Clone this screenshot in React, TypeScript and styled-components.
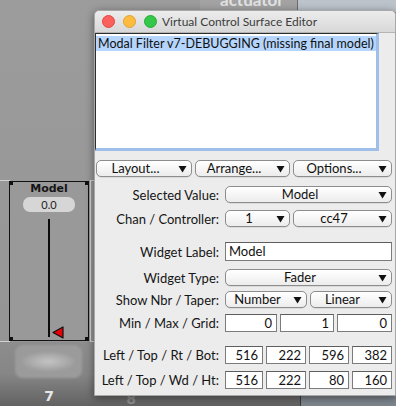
import styled, { createGlobalStyle } from 'styled-components';

const FONT = `"Lucida Grande", Lato, "DejaVu Sans", sans-serif`;

const GlobalStyle = createGlobalStyle`
    html, body {
        margin: 0;
        padding: 0;
        width: 396px;
        height: 406px;
        overflow: hidden;
        background: #9a9a9a;
    }
`

function ArrowDown() {
    return (
        <svg width="9" height="8" viewBox="0 0 9 8">
            <path d="M0.5 1 L8.5 1 L4.5 7.5 Z" fill="#111" />
        </svg>
    );
}

interface DropdownProps {
    value: string;
}

function Dropdown({ value }: DropdownProps) {
    return (
        <DropButton>
            <DropText>{value}</DropText>
            <ArrowBox><ArrowDown /></ArrowBox>
        </DropButton>
    );
}

function FaderWidget() {
    return (
        <>
            <NeighbourFrame style={{ left: -12, width: 20 }} />
            <NeighbourFrame style={{ left: 90, width: 20 }} />
            <FaderBox>
                <Corner $x="left" $y="top" />
                <Corner $x="right" $y="top" />
                <Corner $x="left" $y="bottom" />
                <Corner $x="right" $y="bottom" />
                <FaderTitle>Model</FaderTitle>
                <ValuePill>0.0</ValuePill>
                <Track />
                <Thumb width="12" height="13" viewBox="0 0 12 13">
                    <path d="M1 6.5 L11 1 L11 12 Z" fill="#e8000b" stroke="#111" strokeWidth="1.2" strokeLinejoin="round" />
                </Thumb>
            </FaderBox>
            <Blob />
            <StripNumber $x={49} $top={389} $color="#e8e8e8">7</StripNumber>
            <StripNumber $x={131} $top={392} $color="#8e8e8e">8</StripNumber>
        </>
    );
}

function App() {
    return (
        <Desktop>
            <GlobalStyle />
            <TopStrip>
                <TopLabel>actuator</TopLabel>
            </TopStrip>
            <TopRight />
            <LowerBand />
            <LowerRight />
            <FaderWidget />

            <Window>
                <TitleBar>
                    <Light $color="#fc605c" $border="#de4841" />
                    <Light $color="#fdbc40" $border="#dea234" />
                    <Light $color="#34c84a" $border="#27aa35" />
                    <TitleText>Virtual Control Surface Editor</TitleText>
                </TitleBar>

                <ListRow>
                    <ListBox>
                        <ListItem>Modal Filter v7-DEBUGGING (missing final model)</ListItem>
                    </ListBox>
                </ListRow>

                <ButtonRow>
                    <Dropdown value="Layout..." />
                    <Dropdown value="Arrange..." />
                    <Dropdown value="Options..." />
                </ButtonRow>

                <FormRow $top={9}>
                    <Label>Selected Value:</Label>
                    <Dropdown value="Model" />
                </FormRow>
                <FormRow $top={7}>
                    <Label>Chan / Controller:</Label>
                    <Split $cols="65px 1fr">
                        <Dropdown value="1" />
                        <Dropdown value="cc47" />
                    </Split>
                </FormRow>
                <FormRow $top={15}>
                    <Label>Widget Label:</Label>
                    <TextField $tall $align="left">Model</TextField>
                </FormRow>
                <FormRow $top={8}>
                    <Label>Widget Type:</Label>
                    <Dropdown value="Fader" />
                </FormRow>
                <FormRow $top={5}>
                    <Label>Show Nbr / Taper:</Label>
                    <Split $cols="82px 1fr">
                        <Dropdown value="Number" />
                        <Dropdown value="Linear" />
                    </Split>
                </FormRow>
                <FormRow $top={6}>
                    <Label>Min / Max / Grid:</Label>
                    <Split $cols="52px 54px 1fr" $gap={3}>
                        <TextField $align="right">0</TextField>
                        <TextField $align="right">1</TextField>
                        <TextField $align="right">0</TextField>
                    </Split>
                </FormRow>
                <FormRow $top={14}>
                    <Label>Left / Top / Rt / Bot:</Label>
                    <Split $cols="38px 40px 40px 1fr" $gap={3}>
                        <TextField $align="right">516</TextField>
                        <TextField $align="right">222</TextField>
                        <TextField $align="right">596</TextField>
                        <TextField $align="right">382</TextField>
                    </Split>
                </FormRow>
                <FormRow $top={7}>
                    <Label>Left / Top / Wd / Ht:</Label>
                    <Split $cols="38px 40px 40px 1fr" $gap={3}>
                        <TextField $align="right">516</TextField>
                        <TextField $align="right">222</TextField>
                        <TextField $align="right">80</TextField>
                        <TextField $align="right">160</TextField>
                    </Split>
                </FormRow>
            </Window>
        </Desktop>
    );
}

const Desktop = styled.div`
    position: relative;
    width: 396px;
    height: 406px;
    overflow: hidden;
    background: linear-gradient(180deg, #9c9c9c 0%, #979797 60%, #939393 100%);
    font-family: ${FONT};
`

const TopStrip = styled.div`
    position: absolute;
    left: 200px;
    top: 0;
    width: 97px;
    height: 10px;
    background: #a3a3a3;
    overflow: hidden;
    border-right: 1px solid #6d6d6d;
`

const TopLabel = styled.span`
    position: absolute;
    left: 20px;
    top: -11px;
    font-size: 17px;
    font-weight: bold;
    color: #e2e2e2;
`

const TopRight = styled.div`
    position: absolute;
    left: 298px;
    top: 0;
    width: 98px;
    height: 12px;
    background: #bcc3cb;
`

const LowerBand = styled.div`
    position: absolute;
    left: 0;
    top: 342px;
    width: 396px;
    height: 64px;
    background: linear-gradient(180deg, #8d8d8d 0%, #868686 50%, #626262 100%);
`

const LowerRight = styled.div`
    position: absolute;
    left: 300px;
    top: 390px;
    width: 96px;
    height: 16px;
    background: #7e858d;
    border-left: 1px solid #3a3a3a;
`

const NeighbourFrame = styled.div`
    position: absolute;
    top: 180px;
    height: 160px;
    border: 1px solid #d2d2d2;
`

const FaderBox = styled.div`
    position: absolute;
    left: 9px;
    top: 181px;
    width: 78px;
    height: 158px;
    border: 1px solid #111;
    background: #999;
    display: flex;
    flex-direction: column;
    align-items: center;
`

const Corner = styled.div<{ $x: 'left' | 'right'; $y: 'top' | 'bottom' }>`
    position: absolute;
    ${p => p.$x}: 0;
    ${p => p.$y}: 0;
    width: 3px;
    height: 3px;
    background: #111;
`

const FaderTitle = styled.div`
    font-family: "DejaVu Sans", sans-serif;
    font-size: 11px;
    font-weight: bold;
    color: #151515;
    line-height: 13px;
`

const ValuePill = styled.div`
    margin-top: 2px;
    width: 52px;
    height: 15px;
    border-radius: 7px;
    background: #d6d6d6;
    font-family: Lato, sans-serif;
    font-size: 11px;
    line-height: 15px;
    text-align: center;
    color: #222;
`

const Track = styled.div`
    margin-top: 7px;
    width: 2px;
    height: 118px;
    background: #0c0c0c;
`

const Thumb = styled.svg`
    position: absolute;
    left: 42px;
    top: 144px;
`

const Blob = styled.div`
    position: absolute;
    left: 15px;
    top: 345px;
    width: 67px;
    height: 33px;
    border-radius: 8px;
    background: radial-gradient(ellipse 28px 10px at 50% 50%, #c4c4c4 0%, #a9a9a9 70%, #9b9b9b 100%);
    filter: blur(1px);
`

const StripNumber = styled.div<{ $x: number; $top: number; $color: string }>`
    position: absolute;
    left: ${p => p.$x - 10}px;
    top: ${p => p.$top}px;
    width: 20px;
    text-align: center;
    font-family: "DejaVu Sans", sans-serif;
    font-weight: bold;
    font-size: 14px;
    line-height: 14px;
    color: ${p => p.$color};
`

const Window = styled.div`
    position: absolute;
    left: 94px;
    top: 10px;
    width: 300px;
    height: 384px;
    background: #ececec;
    border: 1px solid #a8a8a8;
    border-radius: 5px 5px 0 0;
    box-shadow: 0 2px 8px rgba(0, 0, 0, 0.45);
    display: flex;
    flex-direction: column;
    z-index: 1;
`

const TitleBar = styled.div`
    height: 21px;
    flex-shrink: 0;
    display: flex;
    align-items: center;
    gap: 8px;
    padding-left: 7px;
    background: linear-gradient(180deg, #ececec 0%, #d8d8d8 100%);
    border-radius: 5px 5px 0 0;
    border-bottom: 1px solid #b4b4b4;
`

const Light = styled.span<{ $color: string; $border: string }>`
    width: 11px;
    height: 11px;
    border-radius: 50%;
    background: ${p => p.$color};
    border: 0.5px solid ${p => p.$border};
`

const TitleText = styled.span`
    margin-left: -3px;
    font-size: 12px;
    color: #3c3c3c;
`

const ListRow = styled.div`
    padding-right: 16px;
`

const ListBox = styled.div`
    height: 112px;
    background: #fff;
    border-style: solid;
    border-width: 1px 3px 3px 1px;
    border-color: #2e2e2e #9fbfe8 #9fbfe8 #2e2e2e;
    padding-top: 2px;
`

const ListItem = styled.div`
    background: #b5d5fc;
    font-size: 12.5px;
    line-height: 15px;
    padding-left: 2px;
    color: #111;
    white-space: nowrap;
`

const ButtonRow = styled.div`
    display: grid;
    grid-template-columns: 96px 95px 1fr;
    gap: 3px;
    padding: 0 3px 0 1px;
    margin-top: 9px;
`

const DropButton = styled.div`
    position: relative;
    height: 15px;
    border: 1px solid #8d8d8d;
    border-radius: 5px;
    background: linear-gradient(180deg, #ffffff 0%, #f6f6f6 50%, #ececec 100%);
    display: flex;
    align-items: center;
    font-size: 13px;
    color: #111;
    box-shadow: 0 0.5px 0 rgba(0, 0, 0, 0.15);
`

const DropText = styled.span`
    flex: 1;
    text-align: center;
    padding-right: 4px;
    white-space: nowrap;
    line-height: 15px;
`

const ArrowBox = styled.span`
    width: 13px;
    display: flex;
    align-items: center;
`

const FormRow = styled.div<{ $top: number }>`
    display: grid;
    grid-template-columns: 124px 1fr;
    column-gap: 6px;
    align-items: center;
    margin-top: ${p => p.$top}px;
    padding-right: 3px;
`

const Label = styled.span`
    text-align: right;
    font-size: 13px;
    color: #151515;
    white-space: nowrap;
`

const Split = styled.div<{ $cols: string; $gap?: number }>`
    display: grid;
    grid-template-columns: ${p => p.$cols};
    gap: ${p => p.$gap ?? 3}px;
`

const TextField = styled.div<{ $align: 'left' | 'right'; $tall?: boolean }>`
    height: ${p => (p.$tall ? 17 : 16)}px;
    background: #fff;
    border: 1px solid #7c7c7c;
    border-top-color: #5e5e5e;
    font-size: 13px;
    line-height: ${p => (p.$tall ? 17 : 16)}px;
    text-align: ${p => p.$align};
    padding: 0 4px 0 3px;
    color: #111;
    box-sizing: content-box;
`

export default App;
